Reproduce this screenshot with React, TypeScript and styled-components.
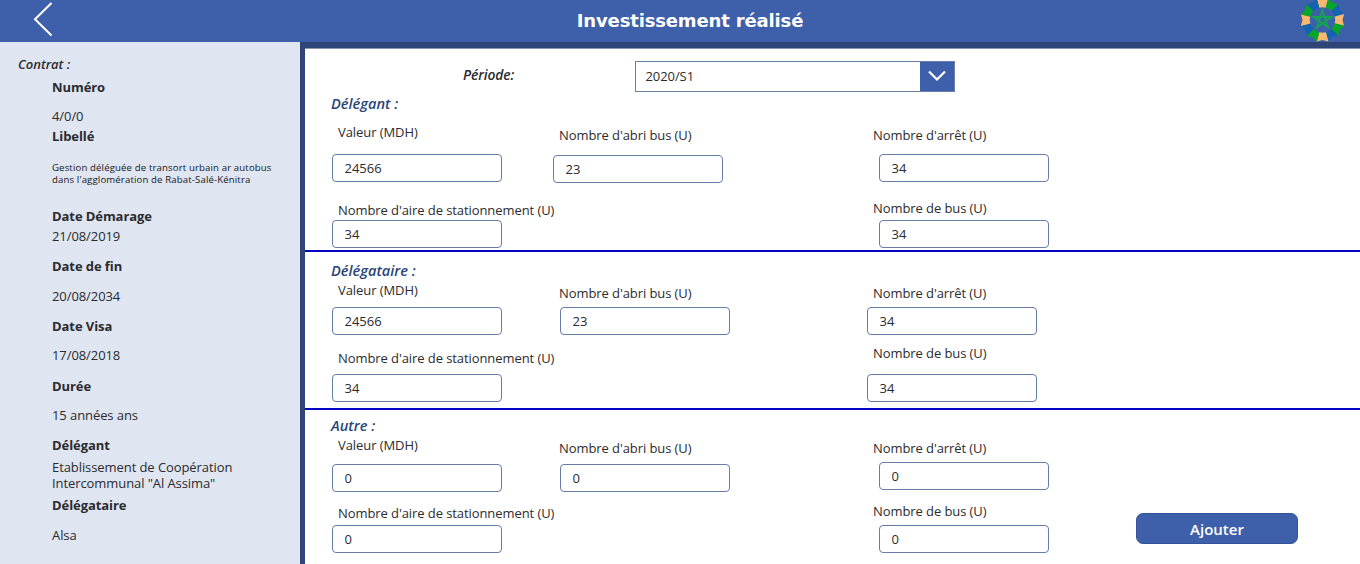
import React from "react";
import styled, { createGlobalStyle } from "styled-components";

const GlobalStyle = createGlobalStyle`
  * { box-sizing: border-box; }
  body { margin: 0; background: #fff; }
`;

const Screen = styled.div`
  width: 1360px;
  height: 564px;
  display: flex;
  flex-direction: column;
  overflow: hidden;
  font-family: "Open Sans", "Segoe UI", sans-serif;
  font-size: 13px;
  line-height: 18px;
  letter-spacing: -0.08px;
  color: #2b2b2e;
`;

const Header = styled.header`
  height: 42px;
  flex: none;
  display: grid;
  grid-template-columns: 100px 1180px 80px;
  background: #3e60aa;
  overflow: hidden;
`;

const BackButton = styled.button`
  border: 0;
  padding: 0 0 0 30px;
  background: none;
  display: flex;
`;

const Title = styled.h1`
  margin: 0;
  text-align: center;
  font: bold 18px/42px Verdana, "DejaVu Sans", sans-serif;
  letter-spacing: -0.15px;
  color: #fff;
`;

const LogoSlot = styled.div`
  padding-left: 20px;
`;

const Body = styled.div`
  flex: 1;
  display: flex;
  min-height: 0;
`;

const Sidebar = styled.aside`
  width: 300px;
  flex: none;
  padding: 13px 0 0 18px;
  background: #dfe5f1;
`;

const SidebarTitle = styled.h2`
  margin: 0;
  font-size: 13px;
  line-height: 18px;
  font-weight: 600;
  font-style: italic;
  letter-spacing: 0;
`;

const Details = styled.dl`
  margin: 5px 0 0;
  padding-left: 34px;
`;

const Term = styled.dt<{ $gap: number }>`
  margin-top: ${(p) => p.$gap}px;
  font-weight: 700;
`;

const Detail = styled.dd<{ $gap: number; $small?: boolean; $tight?: boolean }>`
  margin: ${(p) => p.$gap}px 0 0;
  white-space: pre-line;
  font-size: ${(p) => (p.$small ? "9.6px" : "13px")};
  letter-spacing: ${(p) => (p.$small ? "0.14px" : "-0.08px")};
  line-height: ${(p) => (p.$small ? 12 : p.$tight ? 16 : 18)}px;
  color: ${(p) => (p.$small ? "#17171a" : "inherit")};
`;

const Panel = styled.main`
  flex: 1;
  border-left: 5px solid #2d4577;
  border-top: 6px solid #2d4577;
  background: #fff;
  box-shadow: inset 0 1px 0 #8c96b4;
`;

const PeriodRow = styled.div`
  height: 46px;
  padding: 13px 0 0 158px;
  display: grid;
  grid-template-columns: 172px 320px;
`;

const PeriodLabel = styled.label`
  padding-top: 5px;
  font-size: 13.8px;
  font-weight: 600;
  font-style: italic;
`;

const Select = styled.div`
  height: 31px;
  display: flex;
  border: 1px solid #6a80a8;
`;

const SelectValue = styled.span`
  flex: 1;
  padding-left: 9.5px;
  line-height: 29px;
`;

const SelectArrow = styled.span`
  width: 34px;
  display: flex;
  align-items: center;
  justify-content: center;
  background: #3e60aa;
`;

const Section = styled.section<{ $height: number; $top: number }>`
  height: ${(p) => p.$height}px;
  padding: ${(p) => p.$top}px 0 0 27px;
  border-bottom: 2px solid #0404c4;
  &:last-child { border-bottom: 0; }
`;

const SectionTitle = styled.h2<{ $gap: number }>`
  margin: 0 0 ${(p) => p.$gap + 2}px -1px;
  font-size: 14.6px;
  line-height: 18px;
  font-weight: 600;
  font-style: italic;
  letter-spacing: 0;
  color: #2d4577;
`;

const FieldRow = styled.div<{ $height?: number }>`
  display: grid;
  grid-template-columns: 221px 314px 269px 162px;
  align-items: start;
  height: ${(p) => (p.$height ? `${p.$height}px` : "auto")};
`;

const FieldBox = styled.div<{ $top: number }>`
  padding-top: ${(p) => p.$top}px;
`;

const FieldLabel = styled.label`
  display: block;
  padding-left: 6px;
  white-space: nowrap;
`;

const Input = styled.input<{ $gap: number; $indent: number }>`
  display: block;
  width: 170px;
  height: 28px;
  margin: ${(p) => p.$gap}px 0 0 ${(p) => p.$indent}px;
  padding: 0 11.5px;
  border: 1px solid #667cab;
  border-radius: 4px;
  background: #fff;
  font: inherit;
  letter-spacing: 0;
  color: inherit;
  outline: none;
`;

const AddButton = styled.button`
  width: 162px;
  height: 31px;
  margin-top: 11px;
  padding: 2px 0 0;
  border: 1px solid #35539a;
  border-radius: 7px;
  background: #3e60aa;
  color: #fff;
  font: 600 15px/27px "Open Sans", sans-serif;
`;

type FieldData = { label: string; value: string; top: number; gap: number; indent?: number };

const Field = ({ label, value, top, gap, indent = 0 }: FieldData) => (
  <FieldBox $top={top}>
    <FieldLabel>{label}</FieldLabel>
    <Input defaultValue={value} $gap={gap} $indent={indent} />
  </FieldBox>
);

const details = [
  { term: "Numéro", value: "4/0/0", before: 0, gap: 11 },
  {
    term: "Libellé",
    value: "Gestion déléguée de transort urbain ar autobus\ndans l'agglomération de Rabat-Salé-Kénitra",
    before: 2,
    gap: 17,
    small: true,
  },
  { term: "Date Démarage", value: "21/08/2019", before: 21, gap: 2 },
  { term: "Date de fin", value: "20/08/2034", before: 12, gap: 12 },
  { term: "Date Visa", value: "17/08/2018", before: 12, gap: 11 },
  { term: "Durée", value: "15 années ans", before: 13, gap: 11 },
  {
    term: "Délégant",
    value: 'Etablissement de Coopération\nIntercommunal "Al Assima"',
    before: 12,
    gap: 5,
    tight: true,
  },
  { term: "Délégataire", value: "Alsa", before: 5, gap: 12 },
];

const petalColors = ["#f9b870", "#08a628", "#1463b2"];

// Twelve notched petals around a pentagram
const Logo = () => (
  <svg width="45" height="42" viewBox="-22.5 -20 45 42">
    {Array.from({ length: 12 }, (_, i) => (
      <path
        key={i}
        transform={`rotate(${i * 30})`}
        d="M-6 -21.6L0 -20L6 -21.6L3.4 -12.2L0 -12.8L-3.4 -12.2Z"
        fill={petalColors[i % 3]}
      />
    ))}
    <path d="M0-9.5L5.6 7.3L-9-3H9L-5.6 7.3Z" fill="none" stroke="#12a450" strokeWidth="1.9" />
  </svg>
);

export default function App() {
  return (
    <Screen>
      <GlobalStyle />
      <Header>
        <BackButton aria-label="Retour">
          <svg width="26" height="40" fill="none" stroke="#fff" strokeWidth="2">
            <path d="M21.5 3L5 19.3L21.5 35.5" />
          </svg>
        </BackButton>
        <Title>Investissement réalisé</Title>
        <LogoSlot>
          <Logo />
        </LogoSlot>
      </Header>
      <Body>
        <Sidebar>
          <SidebarTitle>Contrat :</SidebarTitle>
          <Details>
            {details.map((d) => (
              <React.Fragment key={d.term}>
                <Term $gap={d.before}>{d.term}</Term>
                <Detail $gap={d.gap} $small={d.small} $tight={d.tight}>
                  {d.value}
                </Detail>
              </React.Fragment>
            ))}
          </Details>
        </Sidebar>
        <Panel>
          <PeriodRow>
            <PeriodLabel>Période:</PeriodLabel>
            <Select>
              <SelectValue>2020/S1</SelectValue>
              <SelectArrow>
                <svg width="20" height="14" fill="none" stroke="#fff" strokeWidth="2.2">
                  <path d="M2 1.5L10 9.5L18 1.5" />
                </svg>
              </SelectArrow>
            </Select>
          </PeriodRow>
          <Section $height={158} $top={0}>
            <SectionTitle $gap={9}>Délégant :</SectionTitle>
            <FieldRow $height={76}>
              <Field label="Valeur (MDH)" value="24566" top={0} gap={13} />
              <Field label="Nombre d'abri bus (U)" value="23" top={3} gap={11} />
              <Field label="Nombre d'arrêt (U)" value="34" top={3} gap={10} indent={12} />
            </FieldRow>
            <FieldRow>
              <Field label="Nombre d'aire de stationnement (U)" value="34" top={2} gap={1} />
              <span />
              <Field label="Nombre de bus (U)" value="34" top={0} gap={3} indent={12} />
            </FieldRow>
          </Section>
          <Section $height={158} $top={9}>
            <SectionTitle $gap={0}>Délégataire :</SectionTitle>
            <FieldRow $height={63}>
              <Field label="Valeur (MDH)" value="24566" top={0} gap={8} />
              <Field label="Nombre d'abri bus (U)" value="23" top={3} gap={5} indent={7} />
              <Field label="Nombre d'arrêt (U)" value="34" top={3} gap={5} />
            </FieldRow>
            <FieldRow>
              <Field label="Nombre d'aire de stationnement (U)" value="34" top={5} gap={7} />
              <span />
              <Field label="Nombre de bus (U)" value="34" top={0} gap={12} />
            </FieldRow>
          </Section>
          <Section $height={154} $top={6}>
            <SectionTitle $gap={0}>Autre :</SectionTitle>
            <FieldRow $height={66}>
              <Field label="Valeur (MDH)" value="0" top={0} gap={10} />
              <Field label="Nombre d'abri bus (U)" value="0" top={3} gap={7} indent={7} />
              <Field label="Nombre d'arrêt (U)" value="0" top={3} gap={5} indent={12} />
            </FieldRow>
            <FieldRow>
              <Field label="Nombre d'aire de stationnement (U)" value="0" top={2} gap={3} />
              <span />
              <Field label="Nombre de bus (U)" value="0" top={0} gap={5} indent={12} />
              <AddButton>Ajouter</AddButton>
            </FieldRow>
          </Section>
        </Panel>
      </Body>
    </Screen>
  );
}
